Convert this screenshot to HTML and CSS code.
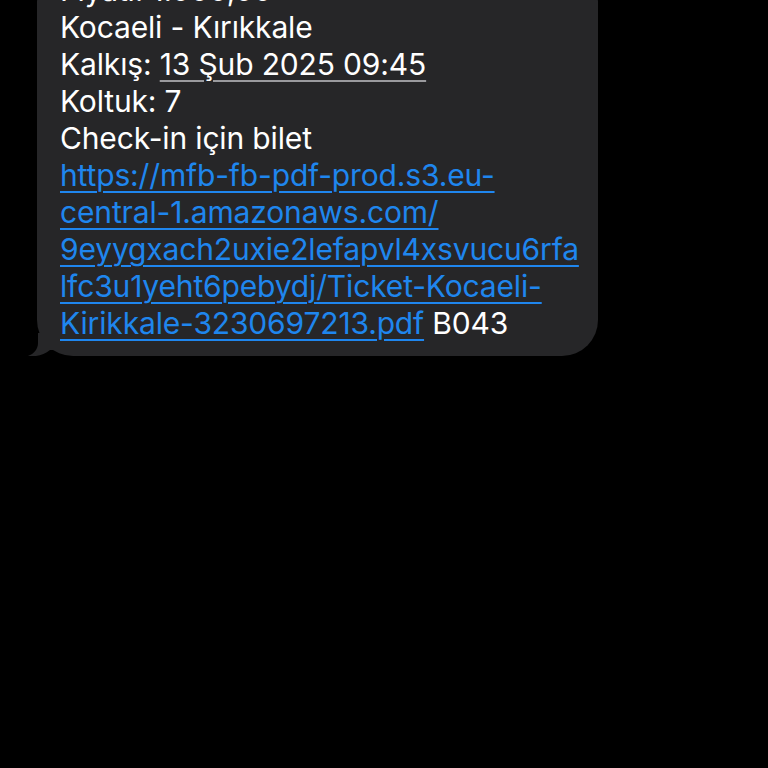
FILE: index.html
```html
<!DOCTYPE html>
<html lang="tr">
<head>
<meta charset="UTF-8">
<meta name="viewport" content="width=device-width, initial-scale=1.0">
<title>Mesaj</title>
<link rel="stylesheet" href="styles.css">
</head>
<body>
<div class="thread">
<div class="bubble">
<div class="msg-text">
Fiyatı: 1.000,00<br>
Kocaeli - Kırıkkale<br>
Kalkış: <span class="detected">13 Şub 2025 09:45</span><br>
Koltuk: 7<br>
Check-in için bilet<br>
<a class="link" href="#">https://mfb-fb-pdf-prod.s3.eu-<br>central-1.amazonaws.com/<br>9eyygxach2uxie2lefapvl4xsvucu6rfa<br>lfc3u1yeht6pebydj/Ticket-Kocaeli-<br>Kirikkale-3230697213.pdf</a> B043
</div>
<svg class="tail" width="30" height="24" viewBox="0 0 30 24">
<path d="M10 0 L10 10 C10 16 6 21 0 23 C8 24 16 22 22 17 L30 17 L30 0 Z" fill="#262628"/>
</svg>
</div>
</div>
</body>
</html>
```

FILE: styles.css
```css
body {
margin: 0;
background: #000;
font-family: Inter, "Noto Sans", sans-serif;
overflow: hidden;
}

.thread {
padding-left: 37px;
}

.bubble {
position: relative;
width: 561px;
margin-top: -33px;
background: #262628;
border-radius: 36px;
box-sizing: border-box;
padding: 5px 10px 14px 23px;
}

.msg-text {
color: #fff;
font-size: 30px;
line-height: 37px;
letter-spacing: -0.15px;
white-space: nowrap;
}

.detected {
text-decoration: underline;
text-decoration-color: #9a9a9e;
text-decoration-thickness: 2px;
text-underline-offset: 5px;
}

.link {
color: #1f86ee;
text-decoration: underline;
text-decoration-thickness: 2px;
text-underline-offset: 5px;
}

.tail {
position: absolute;
left: -9px;
bottom: -1px;
}
```
